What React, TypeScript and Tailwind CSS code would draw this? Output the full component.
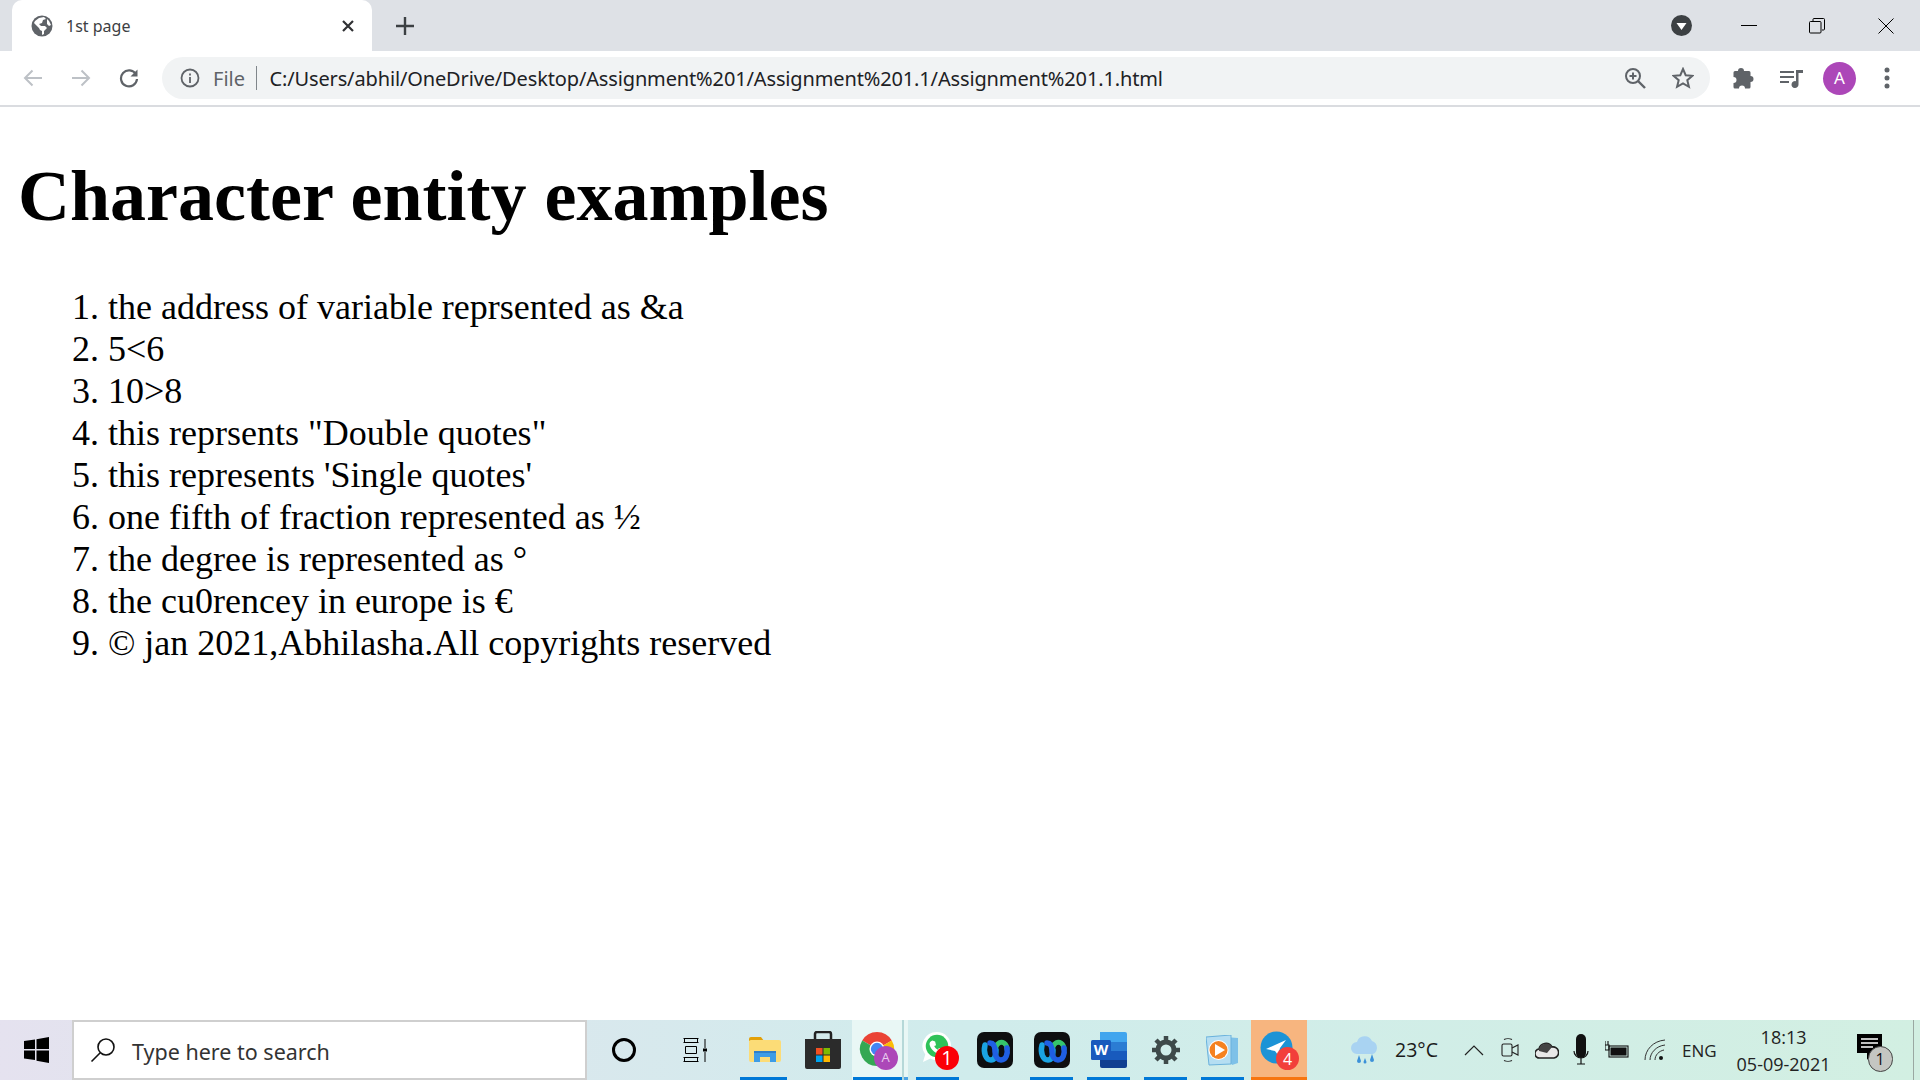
import React from "react";

const items = [
  "the address of variable reprsented as &a",
  "5<6",
  "10>8",
  'this reprsents "Double quotes"',
  "this represents 'Single quotes'",
  "one fifth of fraction represented as ½",
  "the degree is represented as °",
  "the cu0rencey in europe is €",
  "© jan 2021,Abhilasha.All copyrights reserved",
];

const Globe = () => (
  <svg width="22" height="22" viewBox="0 0 22 22">
    <circle cx="11" cy="11" r="10.5" fill="#5f6368" />
    <path d="M3 8l5 5 1 2 2 1v4l2-1v-3l3-3-2-2-4 0-2-2 3-1 1-3 3-1-2-2-5 1-4 3z" fill="#fff" />
    <path d="M16 4l2 2 2 4-2 1-2-2z" fill="#fff" />
  </svg>
);

const Cell = ({ w, lineClass, bg, children }: { w: string; lineClass?: string; bg?: string; children: React.ReactNode }) => (
  <div className={`${w} ${bg ?? ""} relative h-full flex items-center justify-center shrink-0`}>
    {children}
    {lineClass && <div className={`absolute bottom-0 h-[3px] ${lineClass}`} />}
  </div>
);

const Webex = () => (
  <svg width="36" height="36" viewBox="0 0 36 36" fill="none" strokeLinecap="round">
    <rect width="36" height="36" rx="7" fill="#0e0f10" />
    <path d="M19 15c1-4 5-6 8-4s3 4 3 6" stroke="#35c56c" strokeWidth="5" />
    <path d="M8 13c-2 8 1 15 6 15 4 0 5-5 5-10" stroke="#1aa3e2" strokeWidth="5.500" />
    <path d="M13 11c4 0 5 5 5 9 0 5 3 8 6 8 5 0 7-6 6-12" stroke="#1f5fe3" strokeWidth="5.500" />
  </svg>
);

export default function App() {
  return (
    <div className="w-[1920px] h-[1080px] flex flex-col overflow-hidden bg-white font-['Open_Sans','Noto_Sans',sans-serif]">
      {/* Tab strip */}
      <div className="h-[51px] shrink-0 bg-[#dee1e6] flex items-stretch pt-0 pl-[12px]">
        <div className="w-[360px] h-[51px] bg-white rounded-t-[10px] flex items-center">
          <div className="ml-[19px] w-[22px] flex items-center"><Globe /></div>
          <span className="ml-[13px] text-[16px] text-[#3c4043] font-['Noto_Sans',sans-serif] flex-1">1st page</span>
          <svg className="mr-[17px]" width="14" height="14" viewBox="0 0 14 14"><path d="M2 2l10 10M12 2L2 12" stroke="#303134" strokeWidth="2.2" /></svg>
        </div>
        <div className="ml-[23px] flex items-center">
          <svg width="20" height="20" viewBox="0 0 20 20"><path d="M10 1v18M1 10h18" stroke="#3c4043" strokeWidth="2.4" /></svg>
        </div>
        <div className="flex-1" />
        <div className="w-[21px] flex items-center mr-[49px]">
          <svg width="21" height="21" viewBox="0 0 21 21"><circle cx="10.5" cy="10.5" r="10.5" fill="#3c4043" /><path d="M5.5 8h10l-5 7z" fill="#fff" /></svg>
        </div>
        <div className="w-[16px] flex items-center mr-[52px]"><div className="w-[16px] h-[1px] bg-black mb-[1px]" /></div>
        <div className="w-[16px] flex items-center mr-[53px]">
          <svg width="16" height="16" viewBox="0 0 16 16" fill="none" stroke="#000"><rect x="0.5" y="3.5" width="11.5" height="11.5" rx="1" /><path d="M4 3V1.500a1 1 0 0 1 1-1h9.500a1 1 0 0 1 1 1V11a1 1 0 0 1-1 1h-1.500" /></svg>
        </div>
        <div className="w-[16px] flex items-center mr-[26px]">
          <svg width="16" height="16" viewBox="0 0 16 16"><path d="M.5.5l15 15M15.500.5l-15 15" stroke="#000" /></svg>
        </div>
      </div>

      {/* Toolbar */}
      <div className="h-[56px] shrink-0 border-b-2 border-[#dadce0] flex items-center bg-white">
        <div className="w-[162px] h-full relative flex items-center shrink-0">
          <svg className="ml-[23px]" width="20" height="20" viewBox="0 0 20 20" fill="none" stroke="#bdc1c6" strokeWidth="2"><path d="M19 10H2M9.500 2.500L2 10l7.500 7.500" /></svg>
          <svg className="ml-[28px]" width="20" height="20" viewBox="0 0 20 20" fill="none" stroke="#bdc1c6" strokeWidth="2"><path d="M1 10h17M10.500 2.500L18 10l-7.500 7.500" /></svg>
          <svg className="ml-[28px]" width="20" height="20" viewBox="0 0 20 20" fill="none" stroke="#5f6368" strokeWidth="2.200"><path d="M17 6.500A8 8 0 1 0 18 11" /><path d="M18.500 1.500v7h-7z" fill="#5f6368" stroke="none" /></svg>
        </div>
        <div className="w-[1548px] h-[42px] bg-[#f1f3f4] rounded-full flex items-center shrink-0">
          <svg className="ml-[18px]" width="20" height="20" viewBox="0 0 20 20" fill="none" stroke="#5f6368" strokeWidth="1.800"><circle cx="10" cy="10" r="8.500" /><path d="M10 9v6M10 5.500v2" /></svg>
          <span className="ml-[13px] mt-[1px] text-[20px] text-[#5f6368] leading-none font-['Noto_Sans',sans-serif]">File</span>
          <div className="ml-[11px] w-[1.500px] h-[24px] bg-[#80868b]" />
          <span className="ml-[12px] mt-[1px] text-[20px] tracking-[-0.14px] text-[#202124] leading-none font-['Noto_Sans',sans-serif] whitespace-nowrap">C:/Users/abhil/OneDrive/Desktop/Assignment%201/Assignment%201.1/Assignment%201.1.html</span>
          <div className="flex-1" />
          <svg className="mr-[26px]" width="22" height="22" viewBox="0 0 22 22" fill="none" stroke="#5f6368" strokeWidth="2"><circle cx="9" cy="9" r="7" /><path d="M14 14l7 7" strokeWidth="2.400" /><path d="M5.500 9h7M9 5.500v7" /></svg>
          <svg className="mr-[16px]" width="22" height="22" viewBox="0 0 22 22" fill="none" stroke="#5f6368" strokeWidth="2"><path d="M11 2l2.700 6.200 6.800.6-5.200 4.400 1.600 6.600L11 16.300l-5.900 3.500 1.600-6.600L1.500 8.800l6.800-.6z" /></svg>
        </div>
        <div className="flex-1 h-full flex items-center">
          <svg className="ml-[23px]" width="22" height="22" viewBox="0 0 22 22" fill="#5f6368"><path d="M8 1a3 3 0 0 1 3 3h5a1.500 1.500 0 0 1 1.500 1.500V9a3 3 0 0 1 0 6v5a1.500 1.500 0 0 1-1.500 1.500h-4a3 3 0 0 0-6 0H2a1.500 1.500 0 0 1-1.500-1.500v-4a3 3 0 0 0 0-6V5.500A1.500 1.500 0 0 1 2 4h3a3 3 0 0 1 3-3z" /></svg>
          <svg className="ml-[25px]" width="24" height="22" viewBox="0 0 24 22" fill="#5f6368"><path d="M0 4h14v2H0zM0 9h14v2H0zM0 14h9v2H0z" /><path d="M16 3h7v3h-4.500v11.500a3.500 3.500 0 1 1-2.500-3.300z" /></svg>
          <div className="ml-[19px] w-[33px] h-[33px] rounded-full bg-[#ac47b8] flex items-center justify-center text-white text-[17px] font-['Noto_Sans',sans-serif]">A</div>
          <svg className="ml-[28px]" width="6" height="22" viewBox="0 0 6 22" fill="#5f6368"><circle cx="3" cy="3" r="2.500" /><circle cx="3" cy="11" r="2.500" /><circle cx="3" cy="19" r="2.500" /></svg>
        </div>
      </div>

      {/* Page */}
      <div className="flex-1 min-h-0 pl-[18px] font-['Liberation_Serif','Times_New_Roman',serif] text-black">
        <h1 className="text-[72px] font-bold leading-[83px] mt-[48px] mb-[48px]">Character entity examples</h1>
        <ol className="list-decimal pl-[90px] text-[36px] leading-[42px]">
          {items.map((t) => (
            <li key={t}>{t}</li>
          ))}
        </ol>
      </div>

      {/* Taskbar */}
      <div className="h-[60px] shrink-0 flex items-stretch bg-gradient-to-r from-[#e5e2ef] via-[#d0ecec] to-[#d2efe2] font-['Open_Sans',sans-serif]">
        <div className="w-[72px] flex items-center justify-center shrink-0">
          <svg width="25" height="26" viewBox="0 0 25 26" fill="#000"><path d="M0 4l11-1.600V12H0zM12.500 2.200L25 0v12H12.500zM0 13.500h11V23L0 21.500zM12.500 13.500H25V26l-12.500-2.200z" /></svg>
        </div>
        <div className="w-[515px] h-full border-2 border-[#cfcfcf] bg-white flex items-center shrink-0">
          <svg className="ml-[16px]" width="26" height="26" viewBox="0 0 26 26" fill="none" stroke="#111" strokeWidth="1.600"><circle cx="16" cy="10" r="8" /><path d="M10 16L1.500 24.500" /></svg>
          <span className="ml-[16px] mt-[4px] text-[21.500px] leading-none text-[#333] font-['Noto_Sans',sans-serif]">Type here to search</span>
        </div>
        <Cell w="w-[74px]">
          <div className="w-[24px] h-[24px] rounded-full border-[3.500px] border-black" />
        </Cell>
        <Cell w="w-[68px]">
          <svg width="24" height="24" viewBox="0 0 24 24" fill="none" stroke="#000" strokeWidth="1"><path d="M.5 .5h15M.5 4.500h15M.5 19.500h15M.5 23.500h15M1.500 19.500v4M14.500 19.500v4M1.500 .5v4M14.500 .5v4M2.500 8.500h11v7h-11zM22 1v9M22 14v10" /><rect x="20" y="10.500" width="4" height="3" fill="#000" stroke="none" /></svg>
        </Cell>
        <div className="w-[8px] shrink-0" />
        <Cell w="w-[57px]" lineClass="bg-[#0078d7] left-[3px] right-[7px]">
          <svg className="mr-[1px]" width="32" height="26" viewBox="0 0 32 26"><path d="M0 2a2 2 0 0 1 2-2h10l3 4H0z" fill="#e3a008" /><rect x="0" y="3" width="32" height="22" rx="2" fill="#fcdc77" /><path d="M5 25V14h22v11h-6v-5H11v5z" fill="#3d9ce6" /><path d="M5 14h22v2H5z" fill="#2f7fc9" /></svg>
        </Cell>
        <Cell w="w-[58px]">
          <svg width="36" height="38" viewBox="0 0 36 38"><path d="M10 8V3a2 2 0 0 1 2-2h12a2 2 0 0 1 2 2v5" fill="none" stroke="#222" strokeWidth="2.500" /><path d="M0 8h36v28a2 2 0 0 1-2 2H2a2 2 0 0 1-2-2z" fill="#2b2b2b" /><path d="M11 17h6.500v6.500H11z" fill="#f25022" /><path d="M18.500 17H25v6.500h-6.500z" fill="#7fba00" /><path d="M11 24.500h6.500V31H11z" fill="#00a4ef" /><path d="M18.500 24.500H25V31h-6.500z" fill="#ffb900" /></svg>
        </Cell>
        <Cell w="w-[50px]" lineClass="bg-[#0078d7] left-[1px] right-0" bg="bg-[#e9f7f5]">
          <div className="relative w-[36px] h-[38px] ml-[-1px]">
            <svg width="36" height="36" viewBox="0 0 38 38"><path d="M19 19L3.400 10A18 18 0 0 1 34.600 10z" fill="#ea4335" /><path d="M19 19L34.600 10A18 18 0 0 1 19 37z" fill="#fbbc05" /><path d="M19 19L19 37A18 18 0 0 1 3.400 10z" fill="#34a853" /><circle cx="19" cy="19" r="8" fill="#fff" /><circle cx="19" cy="19" r="6.500" fill="#4285f4" /></svg>
            <div className="absolute left-[15px] top-[15px] w-[24px] h-[24px] rounded-full bg-[#ac47b8] flex items-center justify-center text-[#e8cdee] text-[13px]">A</div>
          </div>
        </Cell>
        <Cell w="w-[2px]" bg="bg-[#b6d8d8]"><span /></Cell>
        <Cell w="w-[4px]" lineClass="bg-[#4da3e3] left-0 right-0" bg="bg-[#e9f7f5]"><span /></Cell>
        <div className="w-[2px] shrink-0" />
        <Cell w="w-[56px]" lineClass="bg-[#0078d7] left-[6px] right-[7px]">
          <div className="relative w-[36px] h-[38px]">
            <svg className="ml-[2px]" width="30" height="33" viewBox="0 0 32 35"><path d="M16 1a15 15 0 0 1 0 30c-2.500 0-5-.6-7-1.800L1 33l2.500-8A15 15 0 0 1 16 1z" fill="#fff" /><circle cx="16" cy="16" r="12" fill="#2fc259" /><path d="M11 10l3 1 1 4-2 1c1 2 2 3 4 4l1-2 4 1 1 3c-1 2-3 2-5 2-5-1-9-5-10-10 0-2 1-3 3-4z" fill="#fff" /></svg>
            <div className="absolute left-[15px] top-[15px] w-[24px] h-[24px] rounded-full bg-[#fb0007] flex items-center justify-center text-white text-[20px] leading-none">1</div>
          </div>
        </Cell>
        <Cell w="w-[57px]"><Webex /></Cell>
        <Cell w="w-[57px]" lineClass="bg-[#0078d7] left-[7px] right-[7px]"><Webex /></Cell>
        <Cell w="w-[57px]" lineClass="bg-[#0078d7] left-[7px] right-[7px]">
          <svg width="36" height="36" viewBox="0 0 36 36"><path d="M9 0h25a2 2 0 0 1 2 2v8H9z" fill="#41a5ee" /><path d="M9 10h27v9H9z" fill="#2b7cd3" /><path d="M9 19h27v9H9z" fill="#185abd" /><path d="M9 28h27v6a2 2 0 0 1-2 2H11a2 2 0 0 1-2-2z" fill="#103f91" /><rect x="0" y="8" width="20" height="20" rx="1.500" fill="#185abd" /><text x="10" y="23" textAnchor="middle" fontSize="15" fontWeight="700" fill="#fff" fontFamily="Open Sans">W</text></svg>
        </Cell>
        <Cell w="w-[57px]" lineClass="bg-[#0078d7] left-[7px] right-[7px]">
          <svg width="28" height="28" viewBox="0 0 28 28" fill="none"><circle cx="14" cy="14" r="8" stroke="#3e4a4a" strokeWidth="5" /><path d="M14 0v6M14 22v6M0 14h6M22 14h6M4 4l4 4M20 20l4 4M24 4l-4 4M8 20l-4 4" stroke="#3e4a4a" strokeWidth="4.500" /></svg>
        </Cell>
        <Cell w="w-[57px]" lineClass="bg-[#0078d7] left-[7px] right-[7px]">
          <svg width="33" height="31" viewBox="0 0 33 31"><path d="M6 1l26 2v25l-6 2z" fill="#7ec1e8" /><path d="M0 2l25-2v29L3 30z" fill="#b5def2" stroke="#6bb2dc" /><circle cx="12.500" cy="15" r="10" fill="#fff" /><circle cx="12.500" cy="15" r="9" fill="#f58220" /><path d="M9 9l10 6-10 6z" fill="#fff" /></svg>
        </Cell>
        <Cell w="w-[56px]" lineClass="bg-[#f7750f] left-0 right-0" bg="bg-[#f7b57f]">
          <div className="relative w-[36px] h-[38px]">
            <svg className="ml-[-1px]" width="33" height="33" viewBox="0 0 33 33"><circle cx="16.500" cy="16.500" r="16" fill="#1c93d6" /><path d="M6 18l20-9-6 8-2 7-3-4z" fill="#fff" /></svg>
            <div className="absolute left-[15px] top-[16px] w-[23px] h-[23px] rounded-full bg-[#f23f3a] flex items-center justify-center text-white text-[16px] leading-none">4</div>
          </div>
        </Cell>

        <div className="flex-1 flex items-center relative">
          <svg className="ml-[42px]" width="32" height="32" viewBox="0 0 32 32"><path d="M8 20a6 6 0 0 1 0-12 8 8 0 0 1 15-1 7 7 0 0 1 1 13z" fill="#a9d3f2" /><path d="M10 21l-2 6a2 2 0 0 0 4 0zM23 20l-2 6a2 2 0 0 0 4 0zM16 24l-1.500 4a1.500 1.500 0 0 0 3 0z" fill="#3c91d9" /></svg>
          <span className="ml-[14px] text-[19.500px] text-[#1a1a1a] leading-none">23°C</span>
          <svg className="ml-[26px]" width="20" height="12" viewBox="0 0 20 12" fill="none" stroke="#222" strokeWidth="1.200"><path d="M1 11l9-9 9 9" /></svg>
          <svg className="ml-[17px]" width="18" height="26" viewBox="0 0 18 26" fill="none" stroke="#222" strokeWidth="1.100"><rect x="1" y="7" width="10" height="12" rx="1.500" /><path d="M11 11l6-3v10l-6-3M3 2.500c2-1 6-1 8 0M3 23.500c2 1 6 1 8 0" /></svg>
          <svg className="ml-[16px]" width="24" height="18" viewBox="0 0 24 18"><path d="M5 17a4.500 4.500 0 0 1-1-9 7 7 0 0 1 13-2 5.500 5.500 0 0 1 2 11z" fill="#e8e8e8" stroke="#222" strokeWidth="1.600" /><path d="M4 10a7 7 0 0 1 13-4l-5 6z" fill="#444" /></svg>
          <svg className="ml-[14px]" width="16" height="32" viewBox="0 0 16 32"><rect x="3" y="0" width="10" height="24" rx="5" fill="#111" /><path d="M1 17a7 7 0 0 0 14 0M8 24v6M4 30h8" fill="none" stroke="#111" strokeWidth="1.200" /></svg>
          <svg className="ml-[16px]" width="24" height="18" viewBox="0 0 24 18" fill="none" stroke="#111" strokeWidth="1.100"><rect x="4" y="5" width="19" height="11" /><rect x="6" y="7" width="15" height="7" fill="#111" /><path d="M3 0v4M0 0v4M0 4h4v5H0z" /></svg>
          <svg className="ml-[15px]" width="22" height="22" viewBox="0 0 22 22" fill="none" stroke="#333" strokeWidth="1"><path d="M1 21C1 11 9 2 21 1M6 21C6 14 12 7 21 6M11 21c0-5 4-9 9-10" /><circle cx="17" cy="19" r="2" fill="#111" stroke="none" /></svg>
          <span className="ml-[16px] text-[17px] text-[#222] leading-none">ENG</span>
          <div className="ml-[19px] w-[96px] h-full flex flex-col items-center justify-center gap-[7px] text-[18px] leading-[20px] text-[#222] whitespace-nowrap">
            <span>18:13</span>
            <span>05-09-2021</span>
          </div>
          <div className="ml-[25px] relative w-[26px] h-[34px] mt-[2px]">
            <svg width="25" height="28" viewBox="0 0 25 28"><path d="M0 0h25v19H15l-5 7v-7H0z" fill="#000" /><path d="M4 5h17M4 9h17M4 13h12" stroke="#fff" strokeWidth="1.300" /></svg>
            <div className="absolute left-[11px] top-[12px] w-[25px] h-[26px] rounded-full bg-[#c4c6c2] border border-[#444] flex items-center justify-center text-[16px] text-[#111]">1</div>
          </div>
          <div className="absolute right-[6px] top-0 bottom-0 w-[1px] bg-[#9aa8a2]" />
        </div>
      </div>
    </div>
  );
}
